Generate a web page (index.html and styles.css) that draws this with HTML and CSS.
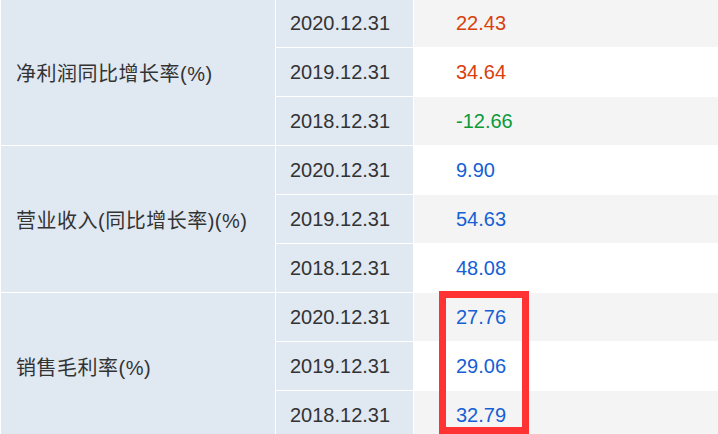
FILE: index.html
```html
<!DOCTYPE html>
<html lang="zh">
<head>
<meta charset="utf-8">
<link rel="stylesheet" href="styles.css">
</head>
<body>
<div class="wrap">
<table class="fin">
  <tbody>
    <tr class="odd">
      <td class="label" rowspan="3">净利润同比增长率(%)</td>
      <td class="date">2020.12.31</td>
      <td class="val up">22.43</td>
    </tr>
    <tr class="even">
      <td class="date">2019.12.31</td>
      <td class="val up">34.64</td>
    </tr>
    <tr class="odd">
      <td class="date">2018.12.31</td>
      <td class="val down">-12.66</td>
    </tr>
    <tr class="even">
      <td class="label" rowspan="3">营业收入(同比增长率)(%)</td>
      <td class="date">2020.12.31</td>
      <td class="val">9.90</td>
    </tr>
    <tr class="odd">
      <td class="date">2019.12.31</td>
      <td class="val">54.63</td>
    </tr>
    <tr class="even">
      <td class="date">2018.12.31</td>
      <td class="val">48.08</td>
    </tr>
    <tr class="odd">
      <td class="label" rowspan="3">销售毛利率(%)</td>
      <td class="date">2020.12.31</td>
      <td class="val">27.76</td>
    </tr>
    <tr class="even">
      <td class="date">2019.12.31</td>
      <td class="val">29.06</td>
    </tr>
    <tr class="odd">
      <td class="date">2018.12.31</td>
      <td class="val">32.79</td>
    </tr>
  </tbody>
</table>
<div class="highlight"></div>
</div>
</body>
</html>
```

FILE: styles.css
```css
html, body {
  margin: 0;
  padding: 0;
  overflow: hidden;
  background: #ffffff;
}

.wrap {
  position: relative;
  width: 718px;
  height: 434px;
  overflow: hidden;
}

.fin {
  margin-top: -2px;
  border-collapse: separate;
  border-spacing: 1px;
  background: #ffffff;
  table-layout: fixed;
  width: 760px;
  font-family: "Liberation Sans", "Noto Sans CJK SC", sans-serif;
  font-size: 20px;
  color: #333333;
}

.fin td {
  height: 48px;
  padding: 0;
  box-sizing: border-box;
  vertical-align: middle;
  white-space: nowrap;
}

.fin tr {
  height: 48px;
}

.label {
  width: 274px;
  background: #e0e8f2;
  padding-left: 15px !important;
  letter-spacing: 0.5px;
  font-family: "Liberation Sans", "Noto Sans CJK SC", sans-serif;
}

.date {
  width: 137px;
  background: #e0e8f2;
  padding-left: 14px !important;
}

.val {
  padding-left: 42px !important;
  color: #1560d4;
}

.odd .val {
  background: #f4f4f4;
}

.even .val {
  background: #ffffff;
}

.val.up {
  color: #d9400c;
}

.val.down {
  color: #0a9a3a;
}

.highlight {
  position: absolute;
  left: 439px;
  top: 291px;
  width: 90px;
  height: 143px;
  box-sizing: border-box;
  border: 7px solid #ff3333;
}
```
